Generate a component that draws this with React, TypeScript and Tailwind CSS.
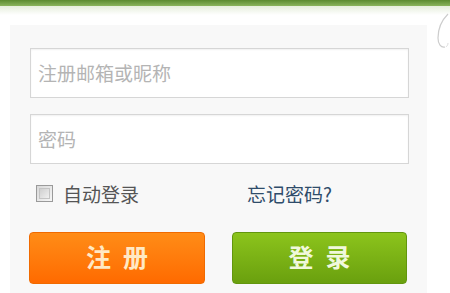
import React from "react";

export default function App() {
  const font = { fontFamily: '"Noto Sans CJK SC", "Noto Sans", sans-serif' };
  return (
    <div className="relative w-[450px] h-[293px] overflow-hidden bg-white" style={font}>
      <div className="h-[6px] bg-gradient-to-b from-[#5b8a2e] to-[#8ab45c]" />
      <div className="h-[9px] bg-gradient-to-b from-[#e6eedc] to-white" />
      <svg className="absolute left-[432px] top-[12px]" width="18" height="40" viewBox="0 0 18 40">
        <path d="M16 2 C 10 8, 6 16, 6 26 C 6 32, 9 36, 13 35" fill="none" stroke="#cdcdcd" strokeWidth="1.2" />
        <path d="M14 35 C 15 34, 16 33, 16 31" fill="none" stroke="#dddddd" strokeWidth="1" />
      </svg>
      <div className="ml-[10px] mt-[10px] w-[417px] h-[268px] bg-[#f8f8f8] pt-[23px] pl-[20px]">
        <div className="w-[379px] h-[50px] border border-[#d6d6d6] bg-white flex items-center pl-[7px] text-[19px] text-[#b4b4b4] shadow-[inset_0_1px_2px_rgba(0,0,0,0.06)]">
          注册邮箱或昵称
        </div>
        <div className="mt-[16px] w-[379px] h-[50px] border border-[#d6d6d6] bg-white flex items-center pl-[7px] text-[19px] text-[#b4b4b4] shadow-[inset_0_1px_2px_rgba(0,0,0,0.06)]">
          密码
        </div>
        <div className="mt-[19px] h-[20px] flex items-center">
          <div className="ml-[6px] w-[17px] h-[17px] border border-[#9a9a9a] bg-gradient-to-br from-[#d8d8d8] to-[#f6f6f6] flex items-center justify-center">
            <div className="w-[11px] h-[11px] border border-[#c4c4c4] bg-gradient-to-br from-[#cfcfcf] to-[#f0f0f0]" />
          </div>
          <span className="ml-[10px] text-[19px] leading-none text-[#555555]">自动登录</span>
          <span className="ml-[108px] text-[19px] leading-none text-[#2f4c6a]">忘记密码?</span>
        </div>
        <div className="mt-[29px] flex -ml-[1px]">
          <div className="w-[176px] h-[52px] rounded-[4px] bg-gradient-to-b from-[#ff8c16] to-[#ff6a00] border border-[#f06a00] flex items-center justify-center pb-[4px] text-[25px] font-bold text-[#ffe9c4] leading-none">
            <span>注</span>
            <span className="ml-[12px]">册</span>
          </div>
          <div className="ml-[27px] w-[175px] h-[52px] rounded-[4px] bg-gradient-to-b from-[#8cc41c] to-[#6aa00e] border border-[#62960e] flex items-center justify-center pb-[4px] text-[25px] font-bold text-[#f0f8dc] leading-none">
            <span>登</span>
            <span className="ml-[12px]">录</span>
          </div>
        </div>
      </div>
    </div>
  );
}
